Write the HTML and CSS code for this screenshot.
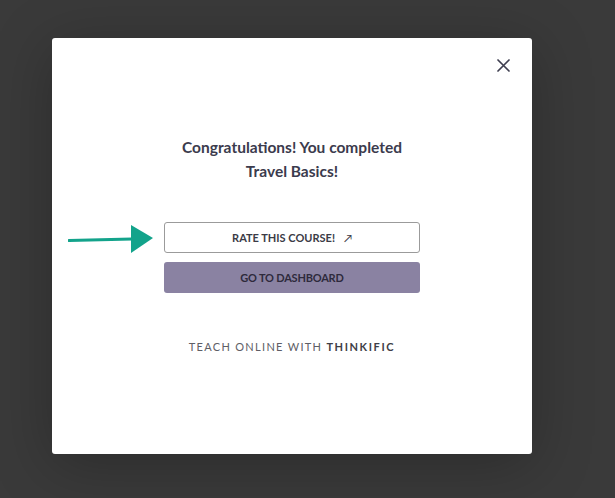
FILE: index.html
```html
<!DOCTYPE html>
<html lang="en">
<head>
  <meta charset="UTF-8">
  <meta name="viewport" content="width=device-width, initial-scale=1.0">
  <title>Course complete</title>
  <link rel="stylesheet" href="styles.css">
</head>
<body>
  <div class="overlay">
    <div class="modal">
      <button class="close" type="button" aria-label="Close">
        <svg width="13" height="13" viewBox="0 0 13 13"><path d="M1 1L12 12M12 1L1 12" stroke="#3f3f50" stroke-width="1.7" stroke-linecap="round"/></svg>
      </button>
      <h2 class="title">Congratulations! You completed<br>Travel Basics!</h2>
      <div class="actions">
        <svg class="pointer" width="86" height="30" viewBox="0 0 86 30"><path d="M1 16.5L64 15" stroke="#13a38b" stroke-width="3" stroke-linecap="round"/><path d="M63 1L85 14L63 29Z" fill="#13a38b"/></svg>
        <button class="btn btn-outline" type="button">Rate this course! <span class="ext">&#8599;</span></button>
        <button class="btn btn-primary" type="button">Go to dashboard</button>
      </div>
      <p class="powered">Teach online with <strong>Thinkific</strong></p>
    </div>
  </div>
</body>
</html>
```

FILE: styles.css
```css
body {
  margin: 0;
  background-color: #3a3a3a;
  font-family: Lato, "Open Sans", sans-serif;
}
.overlay {
  height: 498px;
  padding: 38px 0 0 52px;
  box-sizing: border-box;
}
.modal {
  position: relative;
  width: 480px;
  height: 416px;
  background-color: #fff;
  border-radius: 3px;
  box-shadow: 0 10px 60px rgba(0, 0, 0, 0.25);
  padding-top: 97px;
  box-sizing: border-box;
  text-align: center;
}
.close {
  position: absolute;
  top: 21px;
  right: 22px;
  padding: 0;
  border: none;
  background: none;
  cursor: pointer;
}
.title {
  margin: 0;
  font-size: 15.5px;
  line-height: 24px;
  font-weight: 700;
  color: #3b3b4d;
}
.actions {
  position: relative;
  width: 256px;
  margin: 39px auto 0;
  display: flex;
  flex-direction: column;
  gap: 9px;
}
.pointer {
  position: absolute;
  left: -96px;
  top: 2px;
}
.btn {
  height: 31px;
  border-radius: 3px;
  font-family: Lato, sans-serif;
  font-size: 11px;
  font-weight: 700;
  text-transform: uppercase;
  cursor: pointer;
}
.btn-outline {
  background-color: #fff;
  border: 1px solid #9b9b9b;
  color: #3b3b46;
}
.ext {
  margin-left: 6px;
  font-weight: 400;
}
.btn-primary {
  background-color: #8a82a2;
  border: none;
  color: #2e2a3c;
  letter-spacing: -0.2px;
}
.powered {
  margin: 47px 0 0;
  font-size: 11px;
  letter-spacing: 1.3px;
  text-transform: uppercase;
  color: #5e5e66;
}
.powered strong {
  font-weight: 700;
  letter-spacing: 1.6px;
  color: #3e3e46;
}
```
